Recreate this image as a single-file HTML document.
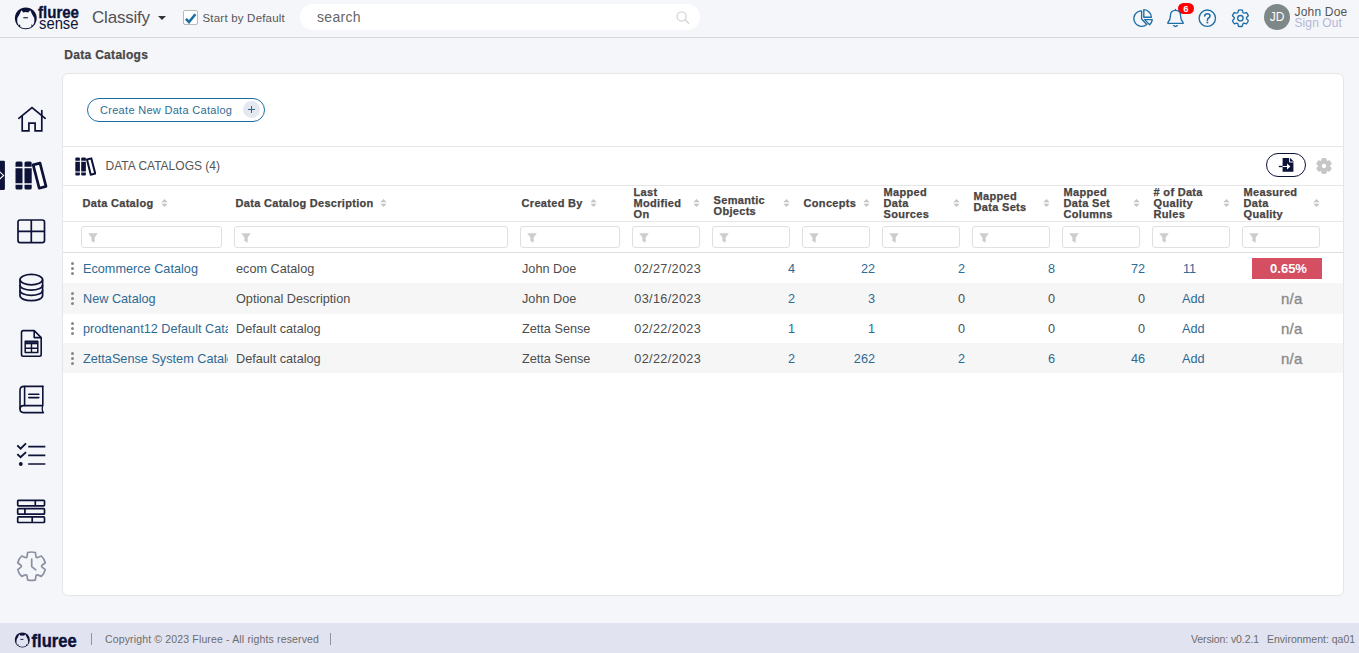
<!DOCTYPE html>
<html>
<head>
<meta charset="utf-8">
<title>Data Catalogs</title>
<style>
*{box-sizing:border-box;margin:0;padding:0}
html,body{width:1359px;height:653px;overflow:hidden}
body{font-family:"Liberation Sans",sans-serif;background:#f5f6fa;color:#444;position:relative}
.abs{position:absolute}
/* header */
#hdr{position:absolute;left:0;top:0;width:1359px;height:38px;border-bottom:1px solid #d6d6d6;background:#f5f6fa}
#appname{position:absolute;left:92px;top:8.2px;font-size:17px;color:#525252;letter-spacing:-.2px;line-height:20px}
#caret{position:absolute;left:158px;top:16px;width:0;height:0;border-left:4.5px solid transparent;border-right:4.5px solid transparent;border-top:4.5px solid #333}
#cb{position:absolute;left:183px;top:10px;width:15px;height:15px;border:1px solid #b9b9b9;border-radius:2px;background:#fff}
#cblabel{position:absolute;left:202.5px;top:11px;font-size:11.5px;color:#555;line-height:14px;letter-spacing:.2px}
#search{position:absolute;left:300px;top:4px;width:400px;height:26px;border-radius:13px;background:#fff}
#search span{position:absolute;left:17px;top:4px;font-size:14px;color:#666;line-height:18px;letter-spacing:.3px}
#uname{position:absolute;left:1294.5px;top:5.8px;font-size:12px;color:#555;line-height:13px;letter-spacing:.2px}
#signout{position:absolute;left:1294.5px;top:16.8px;font-size:12px;color:#b4b6d6;line-height:13px;letter-spacing:.1px}
#avatar{position:absolute;left:1263.8px;top:3.6px;width:26.4px;height:26.4px;border-radius:13.2px;background:#7e8888;color:#fff;font-size:12px;text-align:center;line-height:26.4px}
#badge{position:absolute;left:1178px;top:2.8px;width:16px;height:11.3px;border-radius:6px;background:#fe0000;color:#fff;font-size:9.5px;font-weight:bold;text-align:center;line-height:11.6px}
/* page */
#ptitle{position:absolute;left:64.3px;top:47.5px;font-size:12px;font-weight:bold;color:#4a4646;line-height:15px;letter-spacing:.3px;-webkit-text-stroke:.25px #4a4646}
#card{position:absolute;left:62px;top:73px;width:1282px;height:523px;background:#fff;border:1px solid #e6e6e6;border-radius:6px}
#btn{position:absolute;left:87px;top:98px;width:178px;height:24px;border:1px solid #1b6fa0;border-radius:12px;background:#fff}
#btn span{position:absolute;left:12px;top:4px;font-size:11px;color:#2d6e96;line-height:14px;letter-spacing:.3px;white-space:nowrap}
#btn i{position:absolute;left:155px;top:2px;width:17px;height:17px;border-radius:9px;background:#e4e9f1}
#btn i:before{content:"";position:absolute;left:5.2px;top:8px;width:6.6px;height:1.1px;background:#2f6584}
#btn i:after{content:"";position:absolute;left:8px;top:5.2px;width:1.1px;height:6.6px;background:#2f6584}
.hline{position:absolute;left:63px;width:1280px;height:1px;background:#e6e6e6}
#sect{position:absolute;left:105.5px;top:158.5px;font-size:12px;color:#555;line-height:15px;letter-spacing:0px}
/* table */
.th{position:absolute;font-size:11px;font-weight:bold;color:#474343;line-height:11px;white-space:nowrap;letter-spacing:.3px;margin-left:.6px;-webkit-text-stroke:.25px #474343}
.sort{position:absolute;width:7px;height:8px}
.fi{position:absolute;top:226px;height:22px;border:1px solid #e0e0e0;border-radius:3px;background:#fff}
.row{position:absolute;left:63px;width:1280px;height:30px}
.row.alt{background:#f6f6f6}
.c{position:absolute;top:9px;font-size:12.7px;line-height:15px;white-space:nowrap;color:#4d4d4d}
.c.l{color:#2d6a94}
.c.r{text-align:right}
.na{position:absolute;top:7.3px;left:1218px;font-size:15px;line-height:17px;color:#8a8a8a;letter-spacing:.2px;-webkit-text-stroke:.35px #8a8a8a}
.bad{position:absolute;left:1189px;top:5px;width:70px;height:21px;background:#d44f62;color:#fff;font-weight:bold;font-size:13px;line-height:22.5px;text-align:center;padding-left:3px}
.dots{position:absolute;left:8px;top:8.6px;width:3px;height:13px}
.dots b{display:block;width:3px;height:3px;border-radius:2px;background:#8a8686;margin-bottom:2.1px}
/* footer */
#ftr{position:absolute;left:0;top:623px;width:1359px;height:30px;background:#e1e3f0}
#ftr .t{position:absolute;top:10.3px;font-size:10.5px;color:#6c6c6c;line-height:13px;white-space:nowrap;letter-spacing:.15px}
.vsep{position:absolute;top:633px;width:1px;height:12px;background:#94949c}
</style>
</head>
<body>
<div id="hdr">
  <div id="appname">Classify</div>
  <div id="caret"></div>
  <div id="cb"><svg width="13" height="13" viewBox="0 0 13 13"><path d="M1.9 6.9 L5 10 L11.4 2.2" fill="none" stroke="#1b6ea6" stroke-width="2.6"/></svg></div>
  <div id="cblabel">Start by Default</div>
  <div id="search"><span>search</span></div>
  <div id="avatar">JD</div>
  <div id="uname">John Doe</div>
  <div id="signout">Sign Out</div>
  <div id="badge">6</div>
</div>
<div id="ptitle">Data Catalogs</div>
<div id="card"></div>
<div id="btn"><span>Create New Data Catalog</span><i></i></div>
<div class="hline" style="top:146px"></div>
<div id="sect">DATA CATALOGS (4)</div>
<div class="hline" style="top:185px"></div>
<div class="hline" style="top:221px"></div>
<div class="hline" style="top:252px;background:#ddd"></div>
<div id="tbl"><div class="th" style="left:82px;top:198.0px">Data Catalog</div>
<svg class="sort" style="left:161px;top:198.8px" viewBox="0 0 7 9" preserveAspectRatio="none"><path d="M3.5 0 L6.6 3.6 H0.4 Z M3.5 9 L6.6 5.4 H0.4 Z" fill="#c4c4c4"/></svg>
<div class="fi" style="left:81px;width:141px"><svg style="position:absolute;left:5.8px;top:6px" width="10" height="10" viewBox="0 0 10 10"><path d="M0.2 0.3 H9.8 L6.7 4.4 V9.8 L3.4 7.9 V4.4 Z" fill="#cdcdcd"/></svg></div>
<div class="th" style="left:235px;top:198.0px">Data Catalog Description</div>
<svg class="sort" style="left:380px;top:198.8px" viewBox="0 0 7 9" preserveAspectRatio="none"><path d="M3.5 0 L6.6 3.6 H0.4 Z M3.5 9 L6.6 5.4 H0.4 Z" fill="#c4c4c4"/></svg>
<div class="fi" style="left:234px;width:274px"><svg style="position:absolute;left:5.8px;top:6px" width="10" height="10" viewBox="0 0 10 10"><path d="M0.2 0.3 H9.8 L6.7 4.4 V9.8 L3.4 7.9 V4.4 Z" fill="#cdcdcd"/></svg></div>
<div class="th" style="left:521px;top:198.0px">Created By</div>
<svg class="sort" style="left:590px;top:198.8px" viewBox="0 0 7 9" preserveAspectRatio="none"><path d="M3.5 0 L6.6 3.6 H0.4 Z M3.5 9 L6.6 5.4 H0.4 Z" fill="#c4c4c4"/></svg>
<div class="fi" style="left:520px;width:100px"><svg style="position:absolute;left:5.8px;top:6px" width="10" height="10" viewBox="0 0 10 10"><path d="M0.2 0.3 H9.8 L6.7 4.4 V9.8 L3.4 7.9 V4.4 Z" fill="#cdcdcd"/></svg></div>
<div class="th" style="left:633px;top:187.0px">Last<br>Modified<br>On</div>
<svg class="sort" style="left:693px;top:198.8px" viewBox="0 0 7 9" preserveAspectRatio="none"><path d="M3.5 0 L6.6 3.6 H0.4 Z M3.5 9 L6.6 5.4 H0.4 Z" fill="#c4c4c4"/></svg>
<div class="fi" style="left:632px;width:68px"><svg style="position:absolute;left:5.8px;top:6px" width="10" height="10" viewBox="0 0 10 10"><path d="M0.2 0.3 H9.8 L6.7 4.4 V9.8 L3.4 7.9 V4.4 Z" fill="#cdcdcd"/></svg></div>
<div class="th" style="left:713px;top:194.6px">Semantic<br>Objects</div>
<svg class="sort" style="left:783px;top:198.8px" viewBox="0 0 7 9" preserveAspectRatio="none"><path d="M3.5 0 L6.6 3.6 H0.4 Z M3.5 9 L6.6 5.4 H0.4 Z" fill="#c4c4c4"/></svg>
<div class="fi" style="left:712px;width:78px"><svg style="position:absolute;left:5.8px;top:6px" width="10" height="10" viewBox="0 0 10 10"><path d="M0.2 0.3 H9.8 L6.7 4.4 V9.8 L3.4 7.9 V4.4 Z" fill="#cdcdcd"/></svg></div>
<div class="th" style="left:803px;top:198.0px">Concepts</div>
<svg class="sort" style="left:863px;top:198.8px" viewBox="0 0 7 9" preserveAspectRatio="none"><path d="M3.5 0 L6.6 3.6 H0.4 Z M3.5 9 L6.6 5.4 H0.4 Z" fill="#c4c4c4"/></svg>
<div class="fi" style="left:802px;width:68px"><svg style="position:absolute;left:5.8px;top:6px" width="10" height="10" viewBox="0 0 10 10"><path d="M0.2 0.3 H9.8 L6.7 4.4 V9.8 L3.4 7.9 V4.4 Z" fill="#cdcdcd"/></svg></div>
<div class="th" style="left:883px;top:187.0px">Mapped<br>Data<br>Sources</div>
<svg class="sort" style="left:953px;top:198.8px" viewBox="0 0 7 9" preserveAspectRatio="none"><path d="M3.5 0 L6.6 3.6 H0.4 Z M3.5 9 L6.6 5.4 H0.4 Z" fill="#c4c4c4"/></svg>
<div class="fi" style="left:882px;width:78px"><svg style="position:absolute;left:5.8px;top:6px" width="10" height="10" viewBox="0 0 10 10"><path d="M0.2 0.3 H9.8 L6.7 4.4 V9.8 L3.4 7.9 V4.4 Z" fill="#cdcdcd"/></svg></div>
<div class="th" style="left:973px;top:190.7px">Mapped<br>Data Sets</div>
<svg class="sort" style="left:1043px;top:198.8px" viewBox="0 0 7 9" preserveAspectRatio="none"><path d="M3.5 0 L6.6 3.6 H0.4 Z M3.5 9 L6.6 5.4 H0.4 Z" fill="#c4c4c4"/></svg>
<div class="fi" style="left:972px;width:78px"><svg style="position:absolute;left:5.8px;top:6px" width="10" height="10" viewBox="0 0 10 10"><path d="M0.2 0.3 H9.8 L6.7 4.4 V9.8 L3.4 7.9 V4.4 Z" fill="#cdcdcd"/></svg></div>
<div class="th" style="left:1063px;top:187.0px">Mapped<br>Data Set<br>Columns</div>
<svg class="sort" style="left:1133px;top:198.8px" viewBox="0 0 7 9" preserveAspectRatio="none"><path d="M3.5 0 L6.6 3.6 H0.4 Z M3.5 9 L6.6 5.4 H0.4 Z" fill="#c4c4c4"/></svg>
<div class="fi" style="left:1062px;width:78px"><svg style="position:absolute;left:5.8px;top:6px" width="10" height="10" viewBox="0 0 10 10"><path d="M0.2 0.3 H9.8 L6.7 4.4 V9.8 L3.4 7.9 V4.4 Z" fill="#cdcdcd"/></svg></div>
<div class="th" style="left:1153px;top:187.0px"># of Data<br>Quality<br>Rules</div>
<svg class="sort" style="left:1223px;top:198.8px" viewBox="0 0 7 9" preserveAspectRatio="none"><path d="M3.5 0 L6.6 3.6 H0.4 Z M3.5 9 L6.6 5.4 H0.4 Z" fill="#c4c4c4"/></svg>
<div class="fi" style="left:1152px;width:78px"><svg style="position:absolute;left:5.8px;top:6px" width="10" height="10" viewBox="0 0 10 10"><path d="M0.2 0.3 H9.8 L6.7 4.4 V9.8 L3.4 7.9 V4.4 Z" fill="#cdcdcd"/></svg></div>
<div class="th" style="left:1243px;top:187.0px">Measured<br>Data<br>Quality</div>
<svg class="sort" style="left:1313px;top:198.8px" viewBox="0 0 7 9" preserveAspectRatio="none"><path d="M3.5 0 L6.6 3.6 H0.4 Z M3.5 9 L6.6 5.4 H0.4 Z" fill="#c4c4c4"/></svg>
<div class="fi" style="left:1242px;width:78px"><svg style="position:absolute;left:5.8px;top:6px" width="10" height="10" viewBox="0 0 10 10"><path d="M0.2 0.3 H9.8 L6.7 4.4 V9.8 L3.4 7.9 V4.4 Z" fill="#cdcdcd"/></svg></div>
<div class="row" style="top:253px"><div class="dots"><b></b><b></b><b></b></div><div class="c l" style="left:20px;width:145px;overflow:hidden">Ecommerce Catalog</div><div class="c" style="left:173px">ecom Catalog</div><div class="c" style="left:459px">John Doe</div><div class="c" style="left:571.3px;letter-spacing:.33px">02/27/2023</div><div class="c l r" style="left:672px;width:60px">4</div><div class="c l r" style="left:752px;width:60px">22</div><div class="c l r" style="left:842px;width:60px">2</div><div class="c l r" style="left:932px;width:60px">8</div><div class="c l r" style="left:1022px;width:60px">72</div><div class="c l" style="left:1120px">11</div><div class="bad">0.65%</div></div>
<div class="row alt" style="top:283px;height:30.7px"><div class="dots"><b></b><b></b><b></b></div><div class="c l" style="left:20px;width:145px;overflow:hidden">New Catalog</div><div class="c" style="left:173px">Optional Description</div><div class="c" style="left:459px">John Doe</div><div class="c" style="left:571.3px;letter-spacing:.33px">03/16/2023</div><div class="c l r" style="left:672px;width:60px">2</div><div class="c l r" style="left:752px;width:60px">3</div><div class="c r" style="left:842px;width:60px">0</div><div class="c r" style="left:932px;width:60px">0</div><div class="c r" style="left:1022px;width:60px">0</div><div class="c l" style="left:1119px">Add</div><div class="na">n/a</div></div>
<div class="row" style="top:313px"><div class="dots"><b></b><b></b><b></b></div><div class="c l" style="left:20px;width:145px;overflow:hidden">prodtenant12 Default Catalog</div><div class="c" style="left:173px">Default catalog</div><div class="c" style="left:459px">Zetta Sense</div><div class="c" style="left:571.3px;letter-spacing:.33px">02/22/2023</div><div class="c l r" style="left:672px;width:60px">1</div><div class="c l r" style="left:752px;width:60px">1</div><div class="c r" style="left:842px;width:60px">0</div><div class="c r" style="left:932px;width:60px">0</div><div class="c r" style="left:1022px;width:60px">0</div><div class="c l" style="left:1119px">Add</div><div class="na">n/a</div></div>
<div class="row alt" style="top:343px"><div class="dots"><b></b><b></b><b></b></div><div class="c l" style="left:20px;width:145px;overflow:hidden">ZettaSense System Catalog</div><div class="c" style="left:173px">Default catalog</div><div class="c" style="left:459px">Zetta Sense</div><div class="c" style="left:571.3px;letter-spacing:.33px">02/22/2023</div><div class="c l r" style="left:672px;width:60px">2</div><div class="c l r" style="left:752px;width:60px">262</div><div class="c l r" style="left:842px;width:60px">2</div><div class="c l r" style="left:932px;width:60px">6</div><div class="c l r" style="left:1022px;width:60px">46</div><div class="c l" style="left:1119px">Add</div><div class="na">n/a</div></div></div><!--/tbl-->
<div id="ftr">
  <div class="t" style="left:105px">Copyright © 2023 Fluree - All rights reserved</div>
  <div class="t" style="left:1191px;letter-spacing:-.1px">Version: v0.2.1</div>
  <div class="t" style="left:1267px;letter-spacing:0">Environment: qa01</div>
</div>
<div class="vsep" style="left:91px"></div>
<div class="vsep" style="left:330px"></div>
<div id="icons"><svg class="abs" style="left:12px;top:4px" width="72" height="30" viewBox="12 4 72 30">
<circle cx="25.8" cy="18.3" r="10.9" fill="#0d1238"/>
<path d="M19.4 14.6 L21.4 10.2 L23.4 12.4 Q25.8 11.7 28.2 12.4 L30.2 10.2 L32.2 14.6 Q34.6 17.4 34.4 21 Q34.3 23.6 32.9 25.6 L31.6 24.2 L31.2 26.9 Q28.8 28.3 25.8 28.3 Q22.8 28.3 20.4 26.9 L20 24.2 L18.7 25.6 Q17.3 23.6 17.2 21 Q17 17.4 19.4 14.6 Z" fill="#f5f6fa"/>
<rect x="23.3" y="17.2" width="4.6" height="1.1" fill="#0d1238"/>
<text x="38" y="18.4" font-family="Liberation Sans, sans-serif" font-weight="bold" font-size="16.4" fill="#0d1238" stroke="#0d1238" stroke-width="0.35" textLength="41" lengthAdjust="spacingAndGlyphs">fluree</text>
<text x="39" y="28.8" font-family="Liberation Sans, sans-serif" font-size="16" fill="#0d1238" textLength="39.5" lengthAdjust="spacingAndGlyphs">sense</text>
</svg>
<svg class="abs" style="left:1130px;top:6px" width="26" height="24" viewBox="1130 6 26 24" fill="none" stroke="#1f6ea5" stroke-width="1.35" stroke-linejoin="round" stroke-linecap="round">
<path d="M1141.6 10.8 A7.8 7.8 0 1 0 1146.8 24.5 L1141.6 19 Z"/>
<path d="M1143.8 9.7 V17.2 H1151.4 A7.8 7.8 0 0 0 1143.8 9.7 Z"/>
<path d="M1144.6 19.6 H1152.3 A8 8 0 0 1 1149.6 24.7 Z"/>
</svg>
<svg class="abs" style="left:1164px;top:6px" width="24" height="24" viewBox="1164 6 24 24" fill="none" stroke="#1f6ea5" stroke-width="1.35" stroke-linejoin="round" stroke-linecap="round">
<path d="M1175.5 9.3 V10.4 M1175.5 10.4 C1171.8 10.4 1170.4 13.2 1170.4 16 C1170.4 19.5 1169.3 21 1167.9 22.4 V23.4 H1183.1 V22.4 C1181.7 21 1180.6 19.5 1180.6 16 C1180.6 13.2 1179.2 10.4 1175.5 10.4 Z"/>
<path d="M1173.6 25.6 Q1175.5 27.4 1177.4 25.6"/>
</svg>
<svg class="abs" style="left:1196px;top:6px" width="24" height="24" viewBox="1196 6 24 24" fill="none" stroke="#1f6ea5" stroke-width="1.35" stroke-linecap="round">
<circle cx="1207.3" cy="18.2" r="8.2"/>
<path d="M1204.7 16 Q1204.8 13.7 1207.4 13.7 Q1210 13.7 1210 15.9 Q1210 17.2 1208.6 18 Q1207.4 18.7 1207.4 20.2" stroke-width="1.6"/>
<circle cx="1207.4" cy="22.5" r="1" fill="#1f6ea5" stroke="none"/>
</svg>
<svg class="abs" style="left:1228px;top:6px" width="24" height="24" viewBox="1228 6 24 24" fill="none" stroke="#1f6ea5" stroke-width="1.35" stroke-linejoin="round">
<path d="M1237.88 12.54 L1238.53 10.11 A8.30 8.30 0 0 1 1242.27 10.11 L1242.92 12.54 Q1243.28 13.21 1244.04 13.18 L1246.47 12.54 A8.30 8.30 0 0 1 1248.34 15.77 L1246.57 17.55 Q1246.17 18.20 1246.57 18.85 L1248.34 20.63 A8.30 8.30 0 0 1 1246.47 23.86 L1244.04 23.22 Q1243.28 23.19 1242.92 23.86 L1242.27 26.29 A8.30 8.30 0 0 1 1238.53 26.29 L1237.88 23.86 Q1237.52 23.19 1236.76 23.22 L1234.33 23.86 A8.30 8.30 0 0 1 1232.46 20.63 L1234.23 18.85 Q1234.63 18.20 1234.23 17.55 L1232.46 15.77 A8.30 8.30 0 0 1 1234.33 12.54 L1236.76 13.18 Q1237.52 13.21 1237.88 12.54 Z"/><circle cx="1240.4" cy="18.2" r="2.7"/>
</svg>
<svg class="abs" style="left:14px;top:103px" width="36" height="32" viewBox="14 103 36 32" fill="none" stroke="#0d1238" stroke-width="1.7" stroke-linecap="round" stroke-linejoin="miter">
<path d="M18.8 118.3 L32 107.7 L45.2 118.3"/>
<path d="M41.8 110.6 V115.4"/>
<path d="M22.2 116.3 V130.8 H28.9 V123.2 H35.1 V130.8 H41.8 V116.3"/>
</svg>
<svg class="abs" style="left:0px;top:160px" width="6" height="31" viewBox="0 160 6 31">
<path d="M0 160.8 H3.8 Q4.9 160.8 4.9 161.9 V188.8 Q4.9 189.9 3.8 189.9 H0 Z" fill="#0d1238"/>
<path d="M-0.2 171.8 L3.6 175.4 L-0.2 179" fill="none" stroke="#fff" stroke-width="1.1"/>
</svg>
<svg class="abs" style="left:14.5px;top:160.5px" width="33.0" height="29.0" viewBox="14.5 160.5 33 29">
<path d="M15 162.6 Q15 161.1 16.5 161.1 H20.5 Q22 161.1 22 162.6 V166.2 H15 Z M15 167.8 H22 V182.7 H15 Z M15 184.3 H22 V187.5 Q22 189 20.5 189 H16.5 Q15 189 15 187.5 Z" fill="#0d1238"/>
<path d="M24 162.6 Q24 161.1 25.5 161.1 H29.7 Q31.2 161.1 31.2 162.6 V166.2 H24 Z M24 167.8 H31.2 V182.7 H24 Z M24 184.3 H31.2 V187.5 Q31.2 189 29.7 189 H25.5 Q24 189 24 187.5 Z" fill="#0d1238"/>
<path d="M32.7 164.4 L39.5 162.6 L45.5 185.9 L38.7 187.7 Z" fill="#fff" stroke="#0d1238" stroke-width="2.7" stroke-linejoin="round"/>
</svg>
<svg class="abs" style="left:15px;top:217px" width="33" height="29" viewBox="15 217 33 29" fill="none" stroke="#0d1238" stroke-width="1.7">
<rect x="18" y="220" width="26.5" height="22.6" rx="2.2"/>
<path d="M31.3 220 V242.6 M18 231.4 H44.5"/>
</svg>
<svg class="abs" style="left:15px;top:271px" width="33" height="33" viewBox="15 271 33 33" fill="none" stroke="#0d1238" stroke-width="1.7">
<ellipse cx="31.3" cy="279.6" rx="11.3" ry="5.2"/>
<path d="M20 279.6 V295.6 C20 302.3 42.6 302.3 42.6 295.6 V279.6"/>
<path d="M20 285 C20 291.7 42.6 291.7 42.6 285"/>
<path d="M20 290.3 C20 297 42.6 297 42.6 290.3"/>
</svg>
<svg class="abs" style="left:17px;top:327px" width="29" height="33" viewBox="17 327 29 33" fill="none" stroke="#0d1238" stroke-width="1.6" stroke-linejoin="round">
<path d="M23.2 330.6 H34.2 L41.2 337.6 V354.6 Q41.2 356.3 39.5 356.3 H23.2 Q21.5 356.3 21.5 354.6 V332.3 Q21.5 330.6 23.2 330.6 Z"/>
<path d="M34.2 330.8 V337.6 H41"/>
<rect x="25.2" y="341.3" width="12.6" height="11.2" stroke-width="1.5"/>
<path d="M25.2 343.2 H37.8" stroke-width="2.2"/>
<path d="M25.2 348.3 H37.8 M31.5 344 V352.5" stroke-width="1.4"/>
</svg>
<svg class="abs" style="left:15px;top:382px" width="33" height="35" viewBox="15 382 33 35" fill="none" stroke="#0d1238" stroke-width="1.6" stroke-linejoin="round" stroke-linecap="round">
<path d="M42.8 386.4 H24 Q20 386.4 20 390.4 V409 Q20 412.6 23.6 412.6 H43.4"/>
<path d="M42.8 386.4 V405.6 H23.6 Q20 405.6 20 409"/>
<path d="M24.6 386.6 V405.4"/>
<path d="M42.6 405.8 Q41.6 409 42.9 412.4" stroke-width="1.3"/>
<path d="M28.8 394.3 H38.8 M28.8 397.6 H38.8"/>
</svg>
<svg class="abs" style="left:14px;top:440px" width="35" height="30" viewBox="14 440 35 30" fill="none" stroke="#0d1238" stroke-width="1.7" stroke-linecap="butt">
<path d="M28.2 446.6 H45.3 M28.2 455.3 H45.3 M28.2 464 H45.3"/>
<path d="M17.3 445.4 L20.6 448.6 L26 443.4 M17.3 454.1 L20.6 457.3 L26 452.1" stroke-width="1.9"/>
<circle cx="20.8" cy="464" r="1.9" fill="#0d1238" stroke="none"/>
</svg>
<svg class="abs" style="left:14px;top:497px" width="35" height="30" viewBox="14 497 35 30" fill="none" stroke="#0d1238" stroke-width="1.7">
<rect x="17.7" y="500.3" width="26.8" height="5.6" rx="0.8"/>
<rect x="17.7" y="508.6" width="26.8" height="5.6" rx="0.8"/>
<rect x="17.7" y="516.9" width="26.8" height="5.6" rx="0.8"/>
<path d="M35.3 500.3 V505.9 M24.9 508.6 V514.2 M32.2 516.9 V522.5"/>
</svg>
<svg class="abs" style="left:14px;top:549px" width="35" height="35" viewBox="14 549 35 35" fill="none" stroke="#8b90a1" stroke-width="1.7" stroke-linejoin="round" stroke-linecap="round">
<path d="M27.02 556.59 L27.59 552.55 A14.20 14.20 0 0 1 35.41 552.55 L35.98 556.59 Q36.27 557.94 37.58 557.52 L41.36 555.99 A14.20 14.20 0 0 1 45.28 562.76 L42.06 565.28 Q41.04 566.20 42.06 567.12 L45.28 569.64 A14.20 14.20 0 0 1 41.36 576.41 L37.58 574.88 Q36.27 574.46 35.98 575.81 L35.41 579.85 A14.20 14.20 0 0 1 27.59 579.85 L27.02 575.81 Q26.73 574.46 25.42 574.88 L21.64 576.41 A14.20 14.20 0 0 1 17.72 569.64 L20.94 567.12 Q21.96 566.20 20.94 565.28 L17.72 562.76 A14.20 14.20 0 0 1 21.64 555.99 L25.42 557.52 Q26.73 557.94 27.02 556.59 Z"/>
<path d="M31.7 559.2 V566.6 L35.8 569.8"/>
</svg>
<svg class="abs" style="left:74.7px;top:156.7px" width="21.5" height="18.9" viewBox="14.5 160.5 33 29">
<path d="M15 162.6 Q15 161.1 16.5 161.1 H20.5 Q22 161.1 22 162.6 V166.2 H15 Z M15 167.8 H22 V182.7 H15 Z M15 184.3 H22 V187.5 Q22 189 20.5 189 H16.5 Q15 189 15 187.5 Z" fill="#0d1238"/>
<path d="M24 162.6 Q24 161.1 25.5 161.1 H29.7 Q31.2 161.1 31.2 162.6 V166.2 H24 Z M24 167.8 H31.2 V182.7 H24 Z M24 184.3 H31.2 V187.5 Q31.2 189 29.7 189 H25.5 Q24 189 24 187.5 Z" fill="#0d1238"/>
<path d="M32.9 164.4 L39.5 162.6 L45.5 185.9 L38.7 187.7 Z" fill="#fff" stroke="#0d1238" stroke-width="3.1" stroke-linejoin="round"/>
</svg>
<div class="abs" style="left:1266px;top:153px;width:40px;height:24px;border:1px solid #0d1238;border-radius:12px;background:#fff"></div>
<svg class="abs" style="left:1276px;top:156px" width="20" height="18" viewBox="1276 156 20 18">
<path d="M1282.6 158 H1290.2 L1293.4 161.2 V171.8 H1282.6 Z" fill="#0d1238"/>
<path d="M1289.5 157.8 V162 H1293.6" fill="none" stroke="#fff" stroke-width="0.9"/>
<path d="M1278.8 166.5 H1283" stroke="#0d1238" stroke-width="1.3"/>
<path d="M1282.6 165.9 H1287 V163.4 L1290.4 166.5 L1287 169.6 V167.1 H1282.6 Z" fill="#fff"/>
</svg>
<svg class="abs" style="left:1314px;top:156px" width="20" height="20" viewBox="1314 156 20 20">
<path d="M1321.59 160.83 L1322.06 158.76 A7.50 7.50 0 0 1 1325.94 158.76 L1326.41 160.83 Q1326.71 161.31 1327.27 161.33 L1329.30 160.70 A7.50 7.50 0 0 1 1331.24 164.06 L1329.68 165.50 Q1329.41 166.00 1329.68 166.50 L1331.24 167.94 A7.50 7.50 0 0 1 1329.30 171.30 L1327.27 170.67 Q1326.71 170.69 1326.41 171.17 L1325.94 173.24 A7.50 7.50 0 0 1 1322.06 173.24 L1321.59 171.17 Q1321.29 170.69 1320.73 170.67 L1318.70 171.30 A7.50 7.50 0 0 1 1316.76 167.94 L1318.32 166.50 Q1318.59 166.00 1318.32 165.50 L1316.76 164.06 A7.50 7.50 0 0 1 1318.70 160.70 L1320.73 161.33 Q1321.29 161.31 1321.59 160.83 Z" fill="#c6c6c6" stroke="#c6c6c6" stroke-width="1" stroke-linejoin="round"/><circle cx="1324" cy="166" r="2.2" fill="#fff"/>
</svg>
<svg class="abs" style="left:674px;top:9px" width="18" height="18" viewBox="674 9 18 18" fill="none" stroke="#d3d3d6" stroke-width="1.3" stroke-linecap="round">
<circle cx="681.6" cy="16.4" r="4.6"/><path d="M685 19.8 L688.6 23.2"/>
</svg>
<svg class="abs" style="left:12px;top:626px" width="70" height="26" viewBox="12 626 70 26">
<circle cx="22.3" cy="639.9" r="7.5" fill="#0d1238"/>
<path d="M 17.90 637.35 L 19.27 634.33 L 20.65 635.84 Q 22.30 635.36 23.95 635.84 L 25.33 634.33 L 26.70 637.35 Q 28.36 639.28 28.22 641.76 Q 28.15 643.55 27.19 644.92 L 26.29 643.96 L 26.02 645.82 Q 24.36 646.78 22.30 646.78 Q 20.24 646.78 18.58 645.82 L 18.31 643.96 L 17.41 644.92 Q 16.45 643.55 16.38 641.76 Q 16.24 639.28 17.90 637.35 Z" fill="#e1e3f0"/>
<rect x="20.4" y="638.9" width="3" height="0.9" fill="#0d1238"/>
<text x="31.6" y="646.6" font-family="Liberation Sans, sans-serif" font-weight="bold" font-size="17.5" fill="#0d1238" stroke="#0d1238" stroke-width="0.4" textLength="45" lengthAdjust="spacingAndGlyphs">fluree</text>
</svg></div><!--/icons-->
</body>
</html>
